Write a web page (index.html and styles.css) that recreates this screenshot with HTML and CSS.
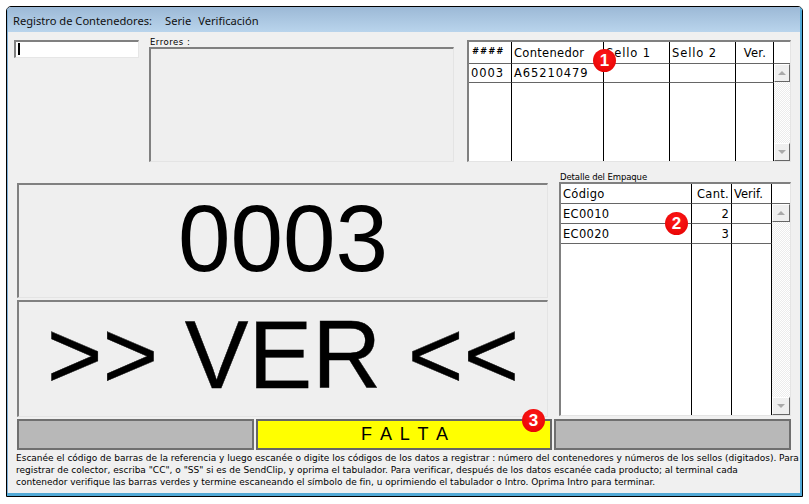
FILE: index.html
```html
<!DOCTYPE html>
<html lang="es">
<head>
<meta charset="utf-8">
<title>Registro de Contenedores</title>
<link rel="stylesheet" href="styles.css">
</head>
<body>
<div class="window">
  <div class="menubar"><span>Registro de Contenedores:</span><span>Serie</span><span>Verificación</span></div>
  <div class="content">
    <div class="top">
      <div class="entry"><span class="caret"></span></div>
      <div class="errors">
        <div class="label label-err">Errores :</div>
        <div class="errbox"></div>
      </div>
      <div class="grid grid-top">
        <table>
          <colgroup><col class="c1"><col class="c2"><col class="c3"><col class="c4"><col class="c5"></colgroup>
          <tr class="rowh"><td class="hash">####</td><td>Contenedor</td><td class="wide">Sello 1</td><td class="wide">Sello 2</td><td class="ctr">Ver.</td></tr>
          <tr class="row"><td class="wide">0003</td><td class="wide">A65210479</td><td></td><td></td><td></td></tr>
          <tr class="fill"><td></td><td></td><td></td><td></td><td></td></tr>
        </table>
        <div class="scroll">
          <div class="scrollhead"></div>
          <div class="track"><div class="btn"><i class="up"></i></div><div class="btn"><i class="down"></i></div></div>
        </div>
      </div>
    </div>
    <div class="middle">
      <div class="displays">
        <div class="display num">0003</div>
        <div class="display msg">&gt;&gt; VER &lt;&lt;</div>
      </div>
      <div class="detail">
        <div class="label label-det">Detalle del Empaque</div>
        <div class="grid grid-det">
          <table>
            <colgroup><col class="d1"><col class="d2"><col class="d3"></colgroup>
            <tr class="rowh"><td>Código</td><td class="rgt">Cant.</td><td class="verif">Verif.</td></tr>
            <tr class="row"><td>EC0010</td><td class="rgt">2</td><td></td></tr>
            <tr class="row"><td>EC0020</td><td class="rgt">3</td><td></td></tr>
            <tr class="fill"><td></td><td></td><td></td></tr>
          </table>
          <div class="scroll">
            <div class="scrollhead"></div>
            <div class="track"><div class="btn"><i class="up"></i></div><div class="btn"><i class="down"></i></div></div>
          </div>
        </div>
      </div>
    </div>
    <div class="status">
      <div class="bar grey"></div>
      <div class="bar yellow">F A L T A</div>
      <div class="bar grey"></div>
    </div>
    <p class="help">Escanée el código de barras de la referencia y luego escanée o digite los códigos de los datos a registrar : número del contenedores y números de los sellos (digitados). Para<br>registrar de colector, escriba "CC", o "SS" si es de SendClip, y oprima el tabulador. Para verificar, después de los datos escanée cada producto; al terminal cada<br>contenedor verifique las barras verdes y termine escaneando el símbolo de fin, u oprimiendo el tabulador o Intro. Oprima Intro para terminar.</p>
  </div>
  <span class="badge b1">1</span>
  <span class="badge b2">2</span>
  <span class="badge b3">3</span>
</div>
</body>
</html>
```
FILE: styles.css
```css
* { box-sizing: border-box; }
html, body { margin: 0; padding: 0; background: #fff; }
body { width: 809px; height: 504px; padding: 6px 0 0 6px; overflow: hidden; font-family: "DejaVu Sans", sans-serif; color: #000; }
.window { position: relative; width: 797px; height: 491px; display: flex; flex-direction: column; border: 1px solid #000; border-radius: 5px 5px 0 0; overflow: hidden; background: #f0f0f0; }
.window::after { content: ""; position: absolute; inset: 0; pointer-events: none; box-shadow: inset -2px -3px 0 #52a9d6, inset 1px 0 0 #7fb0d8; }
.menubar { height: 25px; flex: none; display: flex; gap: 7px; align-items: center; padding: 1px 0 0 6px; font: 11.15px "Noto Sans", "Open Sans", sans-serif; color: #111; background: linear-gradient(#9cb9d6, #b9d4ec); }
.menubar span:first-child { margin-right: 6px; }
.content { flex: 1; display: flex; flex-direction: column; padding: 0 4px 0 7px; min-height: 0; }
.top { height: 130px; flex: none; display: flex; align-items: flex-start; position: relative; }
.entry { width: 125px; height: 18px; margin-top: 8px; background: #fff; border: 1px solid #e6e6e6; border-top: 2px solid #808080; border-left: 2px solid #808080; padding: 1px 0 0 2px; flex: none; }
.caret { display: block; width: 2px; height: 12px; background: #000; }
.errors { width: 305px; margin: 5px 0 0 10px; flex: none; }
.label { font: 8.5px/9px "DejaVu Sans", sans-serif; height: 10px; }
.label-err { letter-spacing: 0.5px; padding-left: 1px; padding-top: 1px; }
.label-det { letter-spacing: -0.1px; padding-left: 1px; padding-top: 1px; }
.errbox { height: 115px; background: #efefef; border: 1px solid #e4e4e4; border-top: 2px solid #808080; border-left: 2px solid #808080; }
.grid { display: flex; border: 1px solid #e4e4e4; border-top: 2px solid #808080; border-left: 2px solid #808080; background: #fff; }
.grid-top { width: 324px; height: 122px; margin: 8px 0 0 13px; flex: none; }
table { border-collapse: separate; border-spacing: 0; table-layout: fixed; height: 100%; flex: none; font: 11.5px "DejaVu Sans", sans-serif; letter-spacing: 0.3px; }
.grid-top table { width: 305px; }
.grid-det table { width: 211px; }
td { border-right: 1px solid #000; border-bottom: 1px solid #666; padding: 0 0 0 2px; white-space: nowrap; overflow: hidden; }
td.wide { letter-spacing: 0.9px; }
.grid-top tr.rowh { height: 22px; }
.grid-top tr.row { height: 19px; }
.grid-det tr.rowh { height: 20px; }
.grid-det tr.row { height: 20px; }
tr.fill td { border-bottom: 0; }
.c1 { width: 43px; } .c2 { width: 92px; } .c3 { width: 66px; } .c4 { width: 66px; } .c5 { width: 38px; }
.d1 { width: 131px; } .d2 { width: 40px; } .d3 { width: 40px; }
.hash { font-size: 8.5px; font-weight: bold; font-style: italic; letter-spacing: 2.2px; padding: 0 0 3px 3px; }
.ctr { text-align: center; padding: 0 0 0 1px; }
.rgt { text-align: right; padding: 0 2px 0 0; }
.verif { letter-spacing: 0; }
.scroll { flex: 1; display: flex; flex-direction: column; min-width: 0; }
.scrollhead { flex: none; border-bottom: 1px solid #666; }
.grid-top .scrollhead { height: 22px; }
.grid-det .scrollhead { height: 20px; }
.track { flex: 1; display: flex; flex-direction: column; justify-content: space-between; background: repeating-conic-gradient(#ececec 0 25%, #fff 0 50%) 0 0 / 2px 2px; }
.btn { height: 18px; background: #efefef; border: 1px solid; border-color: #fff #666 #666 #fff; display: flex; align-items: center; justify-content: center; }
.up, .down { width: 0; height: 0; border-left: 4px solid transparent; border-right: 4px solid transparent; }
.up { border-bottom: 4px solid #a9a9a9; }
.down { border-top: 4px solid #a9a9a9; }
.middle { height: 256px; flex: none; display: flex; padding: 10px 0 0 3px; }
.displays { width: 531px; flex: none; display: flex; flex-direction: column; gap: 2px; padding-top: 11px; }
.display { flex: none; background: #efefef; border: 1px solid #e4e4e4; border-top: 2px solid #808080; border-left: 2px solid #808080; font-family: "Liberation Sans", Arial, sans-serif; text-align: center; color: #000; display: flex; align-items: center; justify-content: center; }
.num { height: 115px; font-size: 94.5px; padding-bottom: 6px; }
.msg { height: 117px; font-size: 95.5px; padding-bottom: 7px; -webkit-text-stroke: 0.4px #000; }
.detail { width: 232px; margin-left: 11px; flex: none; }
.grid-det { height: 234px; }
.status { height: 31px; flex: none; display: flex; gap: 2px; margin: 1px 5px 0 3px; }
.bar { height: 31px; border: 2px solid #6f6f6f; }
.grey { width: 237px; background: #b8b8b8; }
.yellow { width: 296px; background: #ff0; text-align: center; padding-left: 3px; font: 18px/27px "Liberation Sans", Arial, sans-serif; letter-spacing: 1.9px; border-color: #666; }
.help { margin: 2px 0 0 2px; font: 9px/12.2px "DejaVu Sans", sans-serif; white-space: nowrap; }
.badge { position: absolute; width: 23px; height: 23px; border-radius: 50%; background: radial-gradient(circle at 50% 35%, #ff1a1a, #e30000); color: #fff; font: bold 17px/23px "Liberation Sans", Arial, sans-serif; text-align: center; }
.b1 { left: 586px; top: 42px; }
.b2 { left: 658px; top: 205px; }
.b3 { left: 515px; top: 402px; }
```
